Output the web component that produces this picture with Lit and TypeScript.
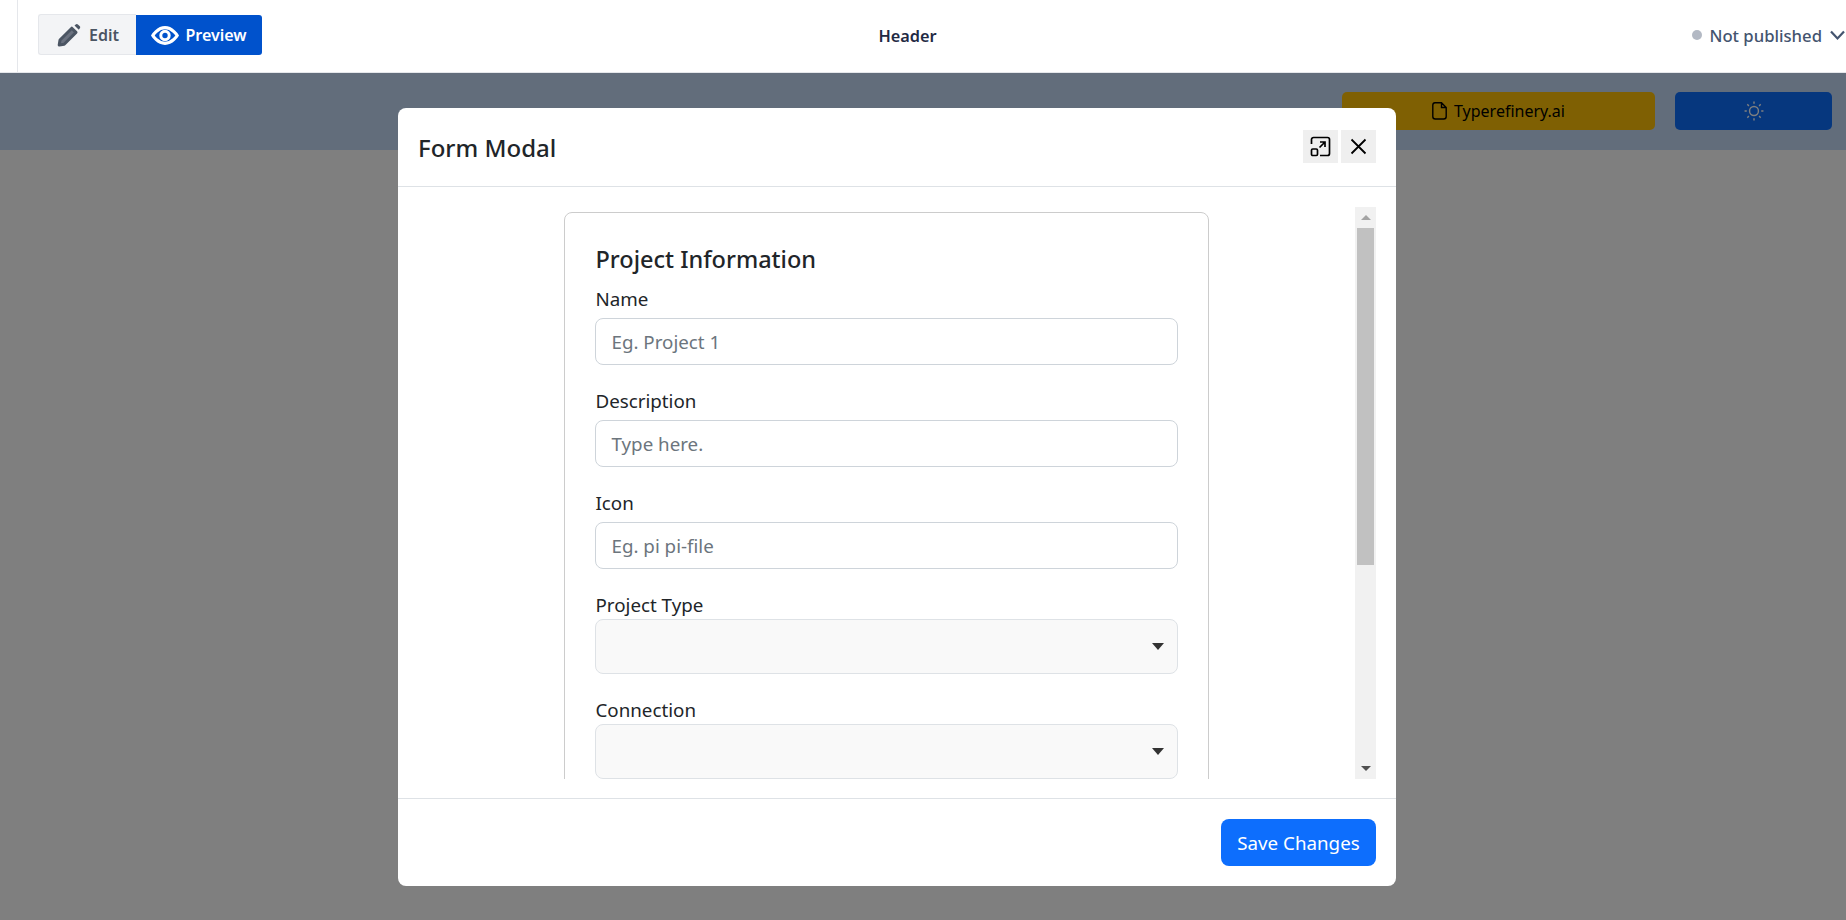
import { LitElement, html, css } from "lit";
import { customElement } from "lit/decorators.js";

@customElement("app-root")
export class AppRoot extends LitElement {
  static styles = css`
    :host { display: block; width: 1846px; height: 920px; position: relative; overflow: hidden; background: #fff; font-family: "Noto Sans", "Open Sans", sans-serif; color: #212529; }
    .top { height: 72px; border-bottom: 1px solid #e5e7eb; background: #fff; position: relative; z-index: 3; display: grid; grid-template-columns: 1fr auto 1fr; align-items: center; padding-left: 17px; box-sizing: content-box; }
    .left { display: flex; height: 72px; align-items: center; border-left: 1px solid #e5e7eb; padding-left: 20px; box-sizing: border-box; padding-bottom: 3px; }
    .group { display: flex; height: 41px; }
    .btn { display: flex; align-items: center; justify-content: center; font-size: 16px; font-weight: 600; box-sizing: border-box; }
    .edit { width: 98px; background: #f3f4f6; border: 1px solid #e5e7eb; border-right: 0; border-radius: 3px 0 0 3px; color: #4b5563; gap: 8px; padding-left: 1px; }
    .preview { width: 126px; background: #0052cc; color: #fff; border-radius: 0 3px 3px 0; gap: 6px; height: 40px; margin-top: 1px; }
    .mid { font-size: 16.3px; font-weight: 600; color: #1f2a44; margin-right: 48px; padding-bottom: 1px; }
    .right { display: flex; justify-content: flex-end; align-items: center; font-size: 16.7px; font-weight: 500; color: #44546f; gap: 7px; padding-bottom: 2px; }
    .dot { width: 10px; height: 10px; background: #b3b9c4; border-radius: 50%; }
    .chev { margin-left: 1px; margin-right: 1px; }
    .band { height: 77px; background: #c4dbf6; display: flex; justify-content: flex-end; align-items: flex-start; padding: 19px 14px 0 0; gap: 20px; box-sizing: border-box; }
    .yellow { width: 313px; height: 38px; background: #ffc107; border-radius: 5px; display: flex; align-items: center; justify-content: center; gap: 7px; font-size: 16px; color: #000; }
    .sun { width: 157px; height: 38px; background: #0d6efd; border-radius: 5px; display: flex; align-items: center; justify-content: center; color: #fff; }
    .overlay { position: absolute; inset: 73px 0 0 0; background: rgba(0,0,0,.502); z-index: 2; }
    .modal { position: absolute; left: 398px; top: 108px; width: 998px; height: 778px; background: #fff; border-radius: 8px; z-index: 4; display: flex; flex-direction: column; box-sizing: border-box; overflow: hidden; }
    .mhead { height: 78px; flex: none; border-bottom: 1px solid #dee2e6; display: flex; align-items: center; justify-content: space-between; padding: 0 20px; box-sizing: content-box; }
    .mhead h1 { margin: 0; font-size: 24px; font-weight: 500; color: #212529; }
    .tools { display: flex; gap: 3px; margin-top: -1px; }
    .tool { width: 35px; height: 33px; background: #efefef; display: flex; align-items: center; justify-content: center; }
    .mbody { flex: 1; min-height: 0; padding: 20px 20px 19px 20px; display: flex; }
    .scroll { flex: 1; min-width: 0; overflow: hidden; display: flex; justify-content: center; padding-top: 5px; }
    .card { width: 645px; height: 800px; flex: none; box-sizing: border-box; border: 1px solid #ccc; border-radius: 8px; padding: 30px; margin-left: -1px; }
    .card h2 { margin: 0 0 10px; font-size: 23.5px; font-weight: 500; line-height: 32px; padding-left: 1px; }
    label { display: block; font-size: 18.75px; line-height: 28px; padding-left: 1px; }
    .field { margin-bottom: 22px; }
    .input { height: 47px; box-sizing: border-box; border: 1px solid #ced4da; border-radius: 8px; padding: 0 16px; display: flex; align-items: center; font-size: 18.75px; color: #6c757d; margin-top: 5px; }
    .select { height: 55px; box-sizing: border-box; border: 1px solid #dee2e6; border-radius: 8px; background: #f9f9f9; display: flex; align-items: center; justify-content: flex-end; padding-right: 13px; }
    .caret { width: 0; height: 0; border-left: 6px solid transparent; border-right: 6px solid transparent; border-top: 7px solid #333; }
    .bar { width: 21px; flex: none; background: #f1f1f1; display: flex; flex-direction: column; align-items: center; }
    .arrow { height: 21px; flex: none; display: flex; align-items: center; justify-content: center; }
    .up { border-left: 5px solid transparent; border-right: 5px solid transparent; border-bottom: 5px solid #a3a3a3; }
    .down { border-left: 5px solid transparent; border-right: 5px solid transparent; border-top: 5px solid #505050; }
    .thumb { width: 17px; height: 337px; background: #c1c1c1; flex: none; }
    .fill { flex: 1; }
    .mfoot { height: 88px; flex: none; border-top: 1px solid #dee2e6; display: flex; align-items: center; justify-content: flex-end; padding: 0 20px; box-sizing: border-box; }
    .save { width: 155px; height: 47px; background: #0d6efd; color: #fff; border-radius: 8px; font-size: 18.75px; display: flex; align-items: center; justify-content: center; }
  `;
  render() {
    return html`
      <div class="top">
        <div class="left"><div class="group">
          <div class="btn edit">
            <svg width="24" height="24" viewBox="0 0 24 24"><path d="M2.200 22l.8-5L14.800 5.200l4.200 4.200L7.200 21.200z" fill="#6b7280" stroke="#4b5563" stroke-width="3" stroke-linejoin="round"/><path d="M17.500 2.400l1.600-1.200a1.500 1.500 0 0 1 1.800.2l1.900 1.900a1.500 1.500 0 0 1 .2 1.800l-1.200 1.600z" fill="#4b5563"/></svg>
            Edit
          </div>
          <div class="btn preview">
            <svg width="28" height="19" viewBox="0 0 28 19" fill="none" stroke="#fff" stroke-width="3.200"><path d="M1.800 9.500S6.500 1.700 14 1.700 26.200 9.500 26.200 9.500 21.500 17.300 14 17.300 1.800 9.500 1.800 9.500z"/><circle cx="14" cy="9.500" r="4.200" stroke-width="3"/></svg>
            Preview
          </div>
        </div></div>
        <div class="mid">Header</div>
        <div class="right"><span class="dot"></span>Not published
          <svg class="chev" width="15" height="11" viewBox="0 0 15 11" fill="none" stroke="#44546f" stroke-width="2.200"><path d="M1 1.500L7.500 8.500 14 1.500"/></svg>
        </div>
      </div>
      <div class="band">
        <div class="yellow">
          <svg width="15" height="18" viewBox="0 0 15 18" fill="none" stroke="#000" stroke-width="1.400"><path d="M3 .8h6.500L14.200 5.500V14.500a2.500 2.500 0 0 1-2.500 2.500H3.300a2.500 2.500 0 0 1-2.500-2.500V3A2.300 2.300 0 0 1 3 .8zM9.500.8v4.700h4.700"/></svg>
          Typerefinery.ai
        </div>
        <div class="sun">
          <svg width="20" height="20" viewBox="0 0 18 18" fill="none" stroke="currentColor" stroke-width="1.300"><circle cx="9" cy="9" r="4"/><path d="M9 .5v2M9 15.500v2M.5 9h2M15.500 9h2M3 3l1.400 1.400M13.600 13.600L15 15M3 15l1.400-1.400M13.600 4.400L15 3"/></svg>
        </div>
      </div>
      <div class="overlay"></div>
      <div class="modal">
        <div class="mhead">
          <h1>Form Modal</h1>
          <div class="tools">
            <div class="tool"><svg width="21" height="21" viewBox="0 0 21 21" fill="none" stroke="#000" stroke-width="1.700"><path d="M1.500 8V3.500a2 2 0 0 1 2-2h14a2 2 0 0 1 2 2v14a2 2 0 0 1-2 2H10"/><rect x="1.500" y="13" width="6" height="6.500" rx="1.200"/><path d="M9.500 11.500l5.500-5.500M10 6h5v5"/></svg></div>
            <div class="tool"><svg width="17" height="17" viewBox="0 0 17 17" fill="none" stroke="#000" stroke-width="1.800"><path d="M1.500 1.500l14 14M15.500 1.500l-14 14"/></svg></div>
          </div>
        </div>
        <div class="mbody">
          <div class="scroll">
            <div class="card">
              <h2>Project Information</h2>
              <div class="field"><label>Name</label><div class="input">Eg. Project 1</div></div>
              <div class="field"><label>Description</label><div class="input">Type here.</div></div>
              <div class="field"><label>Icon</label><div class="input">Eg. pi pi-file</div></div>
              <div class="field"><label>Project Type</label><div class="select"><span class="caret"></span></div></div>
              <div class="field"><label>Connection</label><div class="select"><span class="caret"></span></div></div>
            </div>
          </div>
          <div class="bar">
            <div class="arrow"><span class="up"></span></div>
            <div class="thumb"></div>
            <div class="fill"></div>
            <div class="arrow"><span class="down"></span></div>
          </div>
        </div>
        <div class="mfoot"><div class="save">Save Changes</div></div>
      </div>
    `;
  }
}
